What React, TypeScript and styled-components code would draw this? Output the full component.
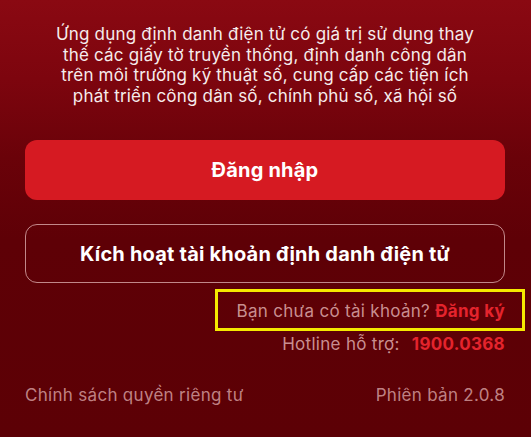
import React from "react";
import styled, { createGlobalStyle } from "styled-components";

const GlobalStyle = createGlobalStyle`
  html, body {
    margin: 0;
    padding: 0;
    background: #5c0005;
  }
  body {
    font-family: Inter, "Noto Sans", "Liberation Sans", sans-serif;
    -webkit-font-smoothing: antialiased;
  }
`;

const Screen = styled.div`
  width: 531px;
  height: 437px;
  box-sizing: border-box;
  padding: 24px 26px 0 25px;
  display: flex;
  flex-direction: column;
  overflow: hidden;
  background: linear-gradient(
    180deg,
    #8a0912 0%,
    #7d050e 18%,
    #6a0209 36%,
    #5e0006 55%,
    #5c0005 100%
  );
`;

const Intro = styled.p`
  margin: 0;
  text-align: center;
  color: #f6ecec;
  font-size: 17px;
  line-height: 20.5px;
  letter-spacing: 0.2px;
`;

const ActionButton = styled.button<{ $variant: "solid" | "outline" }>`
  display: flex;
  align-items: center;
  justify-content: center;
  width: 100%;
  height: ${(p) => (p.$variant === "solid" ? "60px" : "59px")};
  margin-top: ${(p) => (p.$variant === "solid" ? "34px" : "24px")};
  border-radius: 12px;
  border: ${(p) =>
    p.$variant === "solid" ? "none" : "1px solid rgba(255, 220, 220, 0.62)"};
  background: ${(p) => (p.$variant === "solid" ? "#d61a22" : "transparent")};
  color: #ffffff;
  font-family: inherit;
  font-size: 20px;
  font-weight: 700;
  letter-spacing: 0.2px;
  cursor: pointer;
`;

const SignUpRow = styled.div`
  align-self: flex-end;
  box-sizing: border-box;
  width: 310px;
  height: 42px;
  margin: 6px -20px 0 0;
  padding: 7px 17px 5px 0;
  border: 3px solid #f5e900;
  text-align: right;
  font-size: 17px;
  line-height: 24px;
  letter-spacing: 0.3px;
  color: rgba(255, 215, 215, 0.68);
`;

const InfoRow = styled.div`
  display: flex;
  justify-content: flex-end;
  align-items: center;
  gap: 12px;
  margin-top: 2px;
  font-size: 17px;
  line-height: 22px;
  letter-spacing: 0.3px;
  color: rgba(255, 215, 215, 0.68);
`;

const Accent = styled.span`
  color: #e4242d;
  font-weight: 700;
`;

const Footer = styled.div`
  display: flex;
  justify-content: space-between;
  align-items: center;
  margin-top: 29px;
  font-size: 17px;
  line-height: 22px;
  letter-spacing: 0.3px;
  color: rgba(255, 215, 215, 0.62);
`;

export default function App() {
  return (
    <>
      <GlobalStyle />
      <Screen>
        <Intro>
          Ứng dụng định danh điện tử có giá trị sử dụng thay
          <br />
          thế các giấy tờ truyền thống, định danh công dân
          <br />
          trên môi trường kỹ thuật số, cung cấp các tiện ích
          <br />
          phát triển công dân số, chính phủ số, xã hội số
        </Intro>

        <ActionButton $variant="solid">Đăng nhập</ActionButton>
        <ActionButton $variant="outline">
          Kích hoạt tài khoản định danh điện tử
        </ActionButton>

        <SignUpRow>
          Bạn chưa có tài khoản? <Accent>Đăng ký</Accent>
        </SignUpRow>

        <InfoRow>
          <span>Hotline hỗ trợ:</span>
          <Accent>1900.0368</Accent>
        </InfoRow>

        <Footer>
          <span>Chính sách quyền riêng tư</span>
          <span>Phiên bản 2.0.8</span>
        </Footer>
      </Screen>
    </>
  );
}
